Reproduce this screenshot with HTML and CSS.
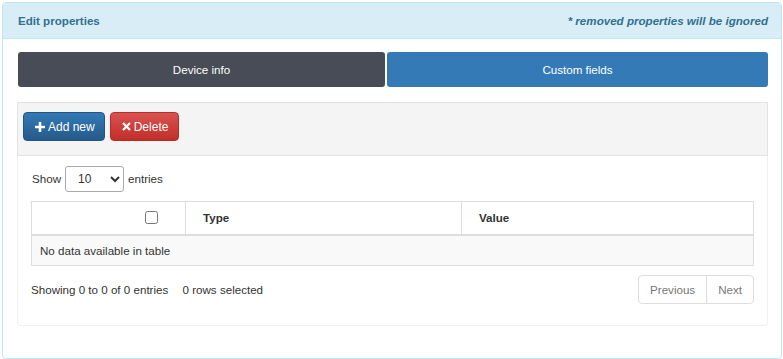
FILE: index.html
```html
<!DOCTYPE html>
<html lang="en">
<head>
    <meta charset="UTF-8">
    <title>Edit properties</title>
    <link rel="stylesheet" href="styles.css">
</head>
<body>
    <div class="panel">
        <div class="panel-heading">
            <span class="panel-title">Edit properties</span>
            <span class="panel-note">* removed properties will be ignored</span>
        </div>

        <div class="panel-body">
            <!-- tabs -->
            <div class="tabs">
                <div class="tab tab-active">Device info</div>
                <div class="tab tab-primary">Custom fields</div>
            </div>

            <!-- toolbar -->
            <div class="well">
                <button class="btn btn-primary">
                    <svg class="btn-icon" width="10" height="10" viewBox="0 0 10 10">
                        <path d="M3.7 0h2.6v3.7H10v2.6H6.3V10H3.7V6.3H0V3.7h3.7z" fill="#fff"/>
                    </svg>Add new
                </button>
                <button class="btn btn-danger">
                    <svg class="btn-icon" width="9" height="9" viewBox="0 0 10 10">
                        <path d="M2 0.3L5 3.3 8 0.3 9.7 2 6.7 5 9.7 8 8 9.7 5 6.7 2 9.7 0.3 8 3.3 5 0.3 2z" fill="#fff"/>
                    </svg>Delete
                </button>
            </div>

            <div class="table-box">
                <div class="length">
                    Show
                    <select class="length-select">
                        <option>10</option>
                        <option>25</option>
                        <option>50</option>
                    </select>
                    entries
                </div>

                <table class="data-table">
                    <thead>
                        <tr>
                            <th class="col-check"><input type="checkbox"></th>
                            <th class="col-type">Type</th>
                            <th>Value</th>
                        </tr>
                    </thead>
                    <tbody>
                        <tr>
                            <td colspan="3">No data available in table</td>
                        </tr>
                    </tbody>
                </table>

                <div class="table-footer">
                    <div class="info">
                        Showing 0 to 0 of 0 entries
                        <span class="selected-info">0 rows selected</span>
                    </div>
                    <div class="pagination">
                        <span class="page-btn">Previous</span>
                        <span class="page-btn">Next</span>
                    </div>
                </div>
            </div>
        </div>
    </div>
</body>
</html>
```

FILE: styles.css
```css
* {
    margin: 0;
    padding: 0;
    box-sizing: border-box;
}

body {
    font-family: 'Liberation Sans', Arial, sans-serif;
    font-size: 11.6px;
    color: #333;
    background: #fff;
    padding: 2px 1px 0 2px;
}

.panel {
    border: 1px solid #bce8f1;
    border-radius: 4px;
    height: 357px;
    overflow: hidden;
}

.panel-heading {
    display: flex;
    justify-content: space-between;
    align-items: center;
    height: 36px;
    padding: 0 13px 0 15px;
    background: #d9edf7;
    border-bottom: 1px solid #bce8f1;
    color: #31708f;
    font-weight: bold;
}

.panel-note {
    font-style: italic;
}

.panel-body {
    padding: 13px 13px 0 14px;
}

/* Tabs */
.tabs {
    display: flex;
    gap: 2px;
    margin-left: 1px;
}

.tab {
    height: 35px;
    line-height: 35px;
    text-align: center;
    color: #fff;
    border-radius: 3px;
}

.tab-active {
    width: 367px;
    background: #474c56;
}

.tab-primary {
    flex: 1;
    background: #337ab7;
}

/* Toolbar */
.well {
    margin-top: 15px;
    height: 54px;
    padding: 9px 5px;
    background: #f4f4f4;
    border: 1px solid #e3e3e3;
    display: flex;
    gap: 5px;
}

.btn {
    height: 29px;
    padding: 0 10px 0 11px;
    border-radius: 4px;
    color: #fff;
    font-family: inherit;
    font-size: 12px;
    display: flex;
    align-items: center;
    cursor: pointer;
}

.btn-icon {
    margin-right: 3px;
}

.btn-primary {
    padding-right: 9px;
    background: linear-gradient(to bottom, #337ab7 0%, #265a88 100%);
    border: 1px solid #245580;
}

.btn-danger {
    background: linear-gradient(to bottom, #d9534f 0%, #c12e2a 100%);
    border: 1px solid #b92c28;
}

/* Table box */
.table-box {
    border: 1px solid #f0f0f0;
    border-top: none;
    border-radius: 0 0 4px 4px;
    padding: 9px 13px 21px 13px;
}

.length {
    display: flex;
    align-items: center;
    gap: 4px;
    height: 27px;
    margin-left: 1px;
}

.length-select {
    width: 59px;
    height: 26px;
    padding: 0 4px 0 8px;
    border: 1px solid #aaa;
    border-radius: 3px;
    background: #fff;
    font-family: inherit;
    font-size: 12px;
    color: #333;
}

.data-table {
    width: 100%;
    margin-top: 9px;
    border-collapse: collapse;
    border: 1px solid #ddd;
}

.data-table th {
    height: 33px;
    padding: 0 17px;
    text-align: left;
    font-weight: bold;
    border: 1px solid #ddd;
    border-bottom: 2px solid #ddd;
}

.data-table th.col-check {
    width: 154px;
    text-align: right;
    padding: 0 27px 0 0;
}

.col-check input {
    width: 13px;
    height: 13px;
    vertical-align: middle;
    margin-top: -2px;
}

.data-table th.col-type {
    width: 276px;
}

.data-table td {
    height: 31px;
    padding: 0 8px;
    background: #f9f9f9;
    border: 1px solid #ddd;
}

.table-footer {
    display: flex;
    justify-content: space-between;
    align-items: center;
    margin-top: 9px;
}

.selected-info {
    margin-left: 11px;
}

.pagination {
    display: flex;
    border: 1px solid #ddd;
    border-radius: 4px;
    color: #777;
}

.page-btn {
    height: 27px;
    line-height: 27px;
    padding: 0 11px;
}

.page-btn + .page-btn {
    border-left: 1px solid #ddd;
}
```
